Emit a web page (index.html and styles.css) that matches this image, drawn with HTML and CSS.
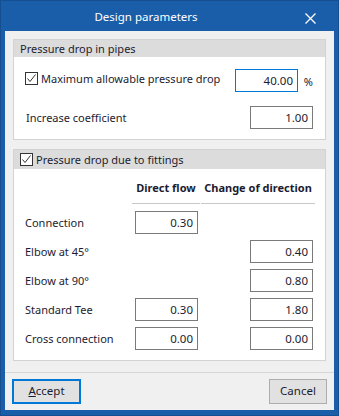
FILE: index.html
```html
<!DOCTYPE html>
<html lang="en">
<head>
  <meta charset="UTF-8">
  <title>Design parameters</title>
  <link rel="stylesheet" href="styles.css">
</head>
<body>

  <div class="window">
    <div class="titlebar">
      <span class="title">Design parameters</span>
      <span class="close">
        <svg width="11" height="11" viewBox="0 0 11 11"><path d="M0.5 0.5 L10.5 10.5 M10.5 0.5 L0.5 10.5" stroke="#fff" stroke-width="1.3" fill="none"/></svg>
      </span>
    </div>

    <div class="content">
      <div class="group">
        <div class="group-head">Pressure drop in pipes</div>
        <div class="group-body pipes">
          <div class="row">
            <label class="check"><span class="box"><svg width="11" height="11" viewBox="0 0 11 11"><polyline points="1.5,5.5 4,8.5 9.5,1.5" stroke="#333" stroke-width="1" fill="none"/></svg></span>Maximum allowable pressure drop</label>
            <input class="num focused" type="text" value="40.00">
            <span class="unit">%</span>
          </div>
          <div class="row">
            <span class="lbl">Increase coefficient</span>
            <input class="num" type="text" value="1.00">
          </div>
        </div>
      </div>

      <div class="group second">
        <div class="group-head"><label class="check"><span class="box"><svg width="11" height="11" viewBox="0 0 11 11"><polyline points="1.5,5.5 4,8.5 9.5,1.5" stroke="#333" stroke-width="1" fill="none"/></svg></span>Pressure drop due to fittings</label></div>
        <div class="group-body fittings">
          <span></span>
          <span class="col-head first">Direct flow</span>
          <span class="col-head">Change of direction</span>

          <span class="lbl">Connection</span>
          <input class="num c1" type="text" value="0.30">
          <span></span>

          <span class="lbl">Elbow at 45°</span>
          <span></span>
          <input class="num c2" type="text" value="0.40">

          <span class="lbl">Elbow at 90°</span>
          <span></span>
          <input class="num c2" type="text" value="0.80">

          <span class="lbl">Standard Tee</span>
          <input class="num c1" type="text" value="0.30">
          <input class="num c2" type="text" value="1.80">

          <span class="lbl">Cross connection</span>
          <input class="num c1" type="text" value="0.00">
          <input class="num c2" type="text" value="0.00">
        </div>
      </div>
    </div>

    <div class="footer">
      <button class="btn default"><u>A</u>ccept</button>
      <button class="btn cancel">Cancel</button>
    </div>
  </div>

</body>
</html>
```

FILE: styles.css
```css
body {
  margin: 0;
  font-family: "Noto Sans", "Open Sans", sans-serif;
  font-size: 11px;
  color: #1c1c30;
}
.window {
  width: 339px;
  height: 416px;
  box-sizing: border-box;
  display: flex;
  flex-direction: column;
  background: #f0f0f0;
  border: 5px solid #1a5ea9;
  border-top: 0;
  border-bottom-width: 6px;
  outline: 1px solid #154f91;
  outline-offset: -1px;
}
.titlebar {
  height: 31px;
  display: flex;
  align-items: center;
  background: #1a5ea9;
  color: #fff;
  flex-shrink: 0;
  font-size: 11.5px;
}
.title {
  flex: 1;
  text-align: center;
  padding-top: 2px;
}
.close {
  width: 47px;
  display: flex;
  justify-content: center;
  padding-top: 5px;
}
.content {
  flex: 1;
  padding: 8px 8px 0;
  border-bottom: 1px solid #d6d6d6;
}
.group {
  border: 1px solid #d3d3d3;
  background: #fff;
}
.group.second {
  margin-top: 9px;
}
.group-head {
  background: #dcdcdc;
  height: 17px;
  line-height: 17px;
  padding-left: 6px;
}
.second .group-head {
  height: 19px;
  display: flex;
  align-items: center;
}
.check {
  display: flex;
  align-items: center;
}
.box {
  width: 11px;
  height: 11px;
  border: 1px solid #333;
  background: #fff;
  margin-right: 3px;
  display: flex;
}
.num {
  width: 63px;
  height: 23px;
  box-sizing: border-box;
  border: 1px solid #7a7a7a;
  background: #fff;
  font: inherit;
  font-size: 11.5px;
  color: inherit;
  text-align: right;
  padding: 0 4px 1px;
  margin: 0;
}
.num.focused {
  border-color: #0078d7;
}
.pipes {
  padding: 12px 12px 10px 11px;
}
.row {
  display: flex;
  align-items: center;
}
.row + .row {
  margin-top: 14px;
}
.row .check, .row .lbl {
  flex: 1;
}
.row .check {
  margin-top: -5px;
}
.row .lbl {
  padding-left: 1px;
}
.unit {
  width: 15px;
  text-align: right;
  padding-top: 2px;
}
.fittings {
  display: grid;
  grid-template-columns: 1fr 69px 114px;
  grid-template-rows: 35px repeat(5, 23px);
  row-gap: 6px;
  align-items: center;
  padding: 0 10px 11px 11px;
}
.fittings > :nth-child(n+4) {
  position: relative;
  top: 1px;
}
.col-head {
  font-weight: bold;
  text-align: center;
  align-self: stretch;
  box-sizing: border-box;
  padding-top: 11px;
  border-bottom: 1px solid #c8c8c8;
  white-space: nowrap;
}
.col-head.first {
  margin-right: 1px;
}
.c1 {
  justify-self: center;
}
.c2 {
  justify-self: end;
  margin-right: 2px;
}
.footer {
  display: flex;
  justify-content: space-between;
  padding: 6px 7px;
}
.btn {
  height: 25px;
  box-sizing: border-box;
  background: #e1e1e1;
  border: 1px solid #adadad;
  font: inherit;
  font-size: 11.5px;
  color: inherit;
  padding: 0 0 2px;
}
.btn.default {
  width: 69px;
  border: 2px solid #0078d7;
}
.btn.cancel {
  width: 58px;
}
```
